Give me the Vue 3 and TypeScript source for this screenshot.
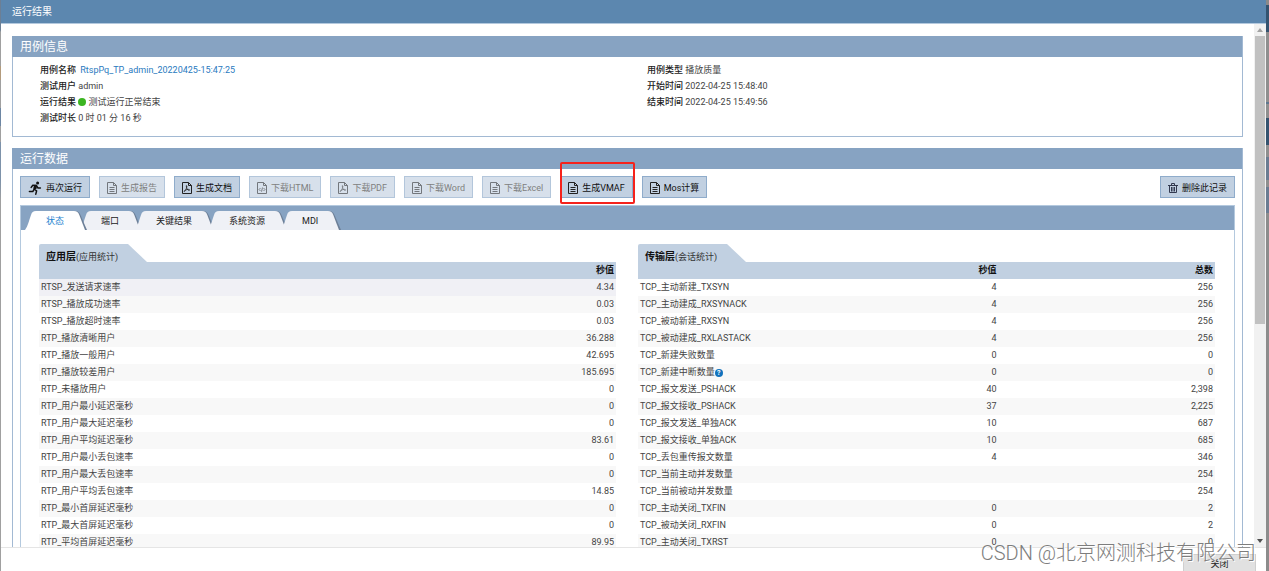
<script setup lang="ts">
import { ref } from 'vue'

interface Action {
  label: string
  icon: 'run' | 'doc' | 'pdf' | 'html'
  disabled?: boolean
  marked?: boolean
}

const actions: Action[] = [
  { label: '再次运行', icon: 'run' },
  { label: '生成报告', icon: 'doc', disabled: true },
  { label: '生成文档', icon: 'pdf' },
  { label: '下载HTML', icon: 'html', disabled: true },
  { label: '下载PDF', icon: 'pdf', disabled: true },
  { label: '下载Word', icon: 'doc', disabled: true },
  { label: '下载Excel', icon: 'doc', disabled: true },
  { label: '生成VMAF', icon: 'doc', marked: true },
  { label: 'Mos计算', icon: 'doc' },
]

const tabs = ['状态', '端口', '关键结果', '系统资源', 'MDI']
const active = ref(0)

const appRows: [string, string][] = [
  ['RTSP_发送请求速率', '4.34'],
  ['RTSP_播放成功速率', '0.03'],
  ['RTSP_播放超时速率', '0.03'],
  ['RTP_播放清晰用户', '36.288'],
  ['RTP_播放一般用户', '42.695'],
  ['RTP_播放较差用户', '185.695'],
  ['RTP_未播放用户', '0'],
  ['RTP_用户最小延迟毫秒', '0'],
  ['RTP_用户最大延迟毫秒', '0'],
  ['RTP_用户平均延迟毫秒', '83.61'],
  ['RTP_用户最小丢包速率', '0'],
  ['RTP_用户最大丢包速率', '0'],
  ['RTP_用户平均丢包速率', '14.85'],
  ['RTP_最小首屏延迟毫秒', '0'],
  ['RTP_最大首屏延迟毫秒', '0'],
  ['RTP_平均首屏延迟毫秒', '89.95'],
]

const tcpRows: [string, string, string][] = [
  ['TCP_主动新建_TXSYN', '4', '256'],
  ['TCP_主动建成_RXSYNACK', '4', '256'],
  ['TCP_被动新建_RXSYN', '4', '256'],
  ['TCP_被动建成_RXLASTACK', '4', '256'],
  ['TCP_新建失败数量', '0', '0'],
  ['TCP_新建中断数量', '0', '0'],
  ['TCP_报文发送_PSHACK', '40', '2,398'],
  ['TCP_报文接收_PSHACK', '37', '2,225'],
  ['TCP_报文发送_单独ACK', '10', '687'],
  ['TCP_报文接收_单独ACK', '10', '685'],
  ['TCP_丢包重传报文数量', '4', '346'],
  ['TCP_当前主动并发数量', '', '254'],
  ['TCP_当前被动并发数量', '', '254'],
  ['TCP_主动关闭_TXFIN', '0', '2'],
  ['TCP_被动关闭_RXFIN', '0', '2'],
  ['TCP_主动关闭_TXRST', '0', '0'],
]
</script>

<template>
  <div class="page">
    <div class="dialog">
      <header class="title">运行结果</header>
      <div class="body">
        <main class="content">
          <section class="panel">
            <h2>用例信息</h2>
            <div class="info">
              <div>
                <p><b>用例名称</b> <a href="#" class="case">RtspPq_TP_admin_20220425-15:47:25</a></p>
                <p><b>测试用户</b> admin</p>
                <p><b>运行结果</b> <i class="dot"></i> 测试运行正常结束</p>
                <p><b>测试时长</b> 0 时 01 分 16 秒</p>
              </div>
              <div>
                <p><b>用例类型</b> 播放质量</p>
                <p><b>开始时间</b> 2022-04-25 15:48:40</p>
                <p><b>结束时间</b> 2022-04-25 15:49:56</p>
              </div>
            </div>
          </section>

          <section class="panel data">
            <h2>运行数据</h2>
            <div class="toolbar">
              <span v-for="a in actions" :key="a.label" class="slot">
                <button type="button" class="btn" :disabled="a.disabled">
                  <svg v-if="a.icon === 'run'" width="14" height="14" viewBox="0 0 14 14">
                    <circle cx="9.6" cy="2" r="1.5" fill="#111" />
                    <path d="M8 4.2 6 8l2.6 1.8-.8 3.4M6.2 8.2 4.8 10.6H1.4M8 4.4 4.8 4.2 3.2 6.4M8.4 4.8l1.6 2.2h2.4" fill="none" stroke="#111" stroke-width="1.5" stroke-linecap="round" stroke-linejoin="round" />
                    <path d="M6.6 3.8 9.2 4.2 8.4 8 6.2 8.2 5.4 7z" fill="#111" />
                  </svg>
                  <svg v-else width="10" height="12" viewBox="0 0 10 12" fill="none" stroke="#222" stroke-width="1">
                    <path d="M.5.5h6l3 3v8h-9zM6.5.5v3h3" />
                    <path v-if="a.icon === 'doc'" d="M2.5 5.5h5M2.5 7.5h5M2.5 9.5h5" />
                    <path v-else-if="a.icon === 'pdf'" d="M4.3 3.6c1 0 .5 2.2-.5 4.1S2 10 2.1 9.2 4.5 7.4 6.3 7.4s1.700 1.100.6 1S4.100 6 4.300 3.600" stroke-width=".8" />
                    <path v-else d="M3.500 6 2 7.500 3.500 9M6.500 6 8 7.500 6.500 9M5.500 5.500 4.500 9.700" stroke-width=".9" />
                  </svg>
                  <span>{{ a.label }}</span>
                </button>
                <i v-if="a.marked" class="mark"></i>
              </span>
              <button type="button" class="btn remove">
                <svg width="10" height="12" viewBox="0 0 10 12" fill="none" stroke="#333a50">
                  <path d="M0 3.500h10M3.500 3V1.500h3V3M1.500 3.500v7h7v-7M3.500 5v4.500M5 5v4.500M6.500 5v4.500" />
                </svg>
                <span>删除此记录</span>
              </button>
            </div>

            <div class="tabbox">
              <div class="tabs" role="tablist">
                <button
                  v-for="(t, i) in tabs"
                  :key="t"
                  type="button"
                  role="tab"
                  class="tab"
                  :class="{ on: i === active }"
                  :aria-selected="i === active"
                  @click="active = i"
                >
                  <svg class="end" width="11" height="19" viewBox="0 0 11 19">
                    <path class="face" d="M0 19C3 15 4 9 6 4 7 1 8 0 11 0V19z" />
                  </svg>
                  <span class="mid">{{ t }}</span>
                  <svg class="end" width="13" height="19" viewBox="0 0 13 19">
                    <path d="M0 0C4 0 5 1 6.500 4L13 19H9z" fill="#6c7f97" />
                    <path class="face" d="M0 0C3 0 4 1 5.300 4L11 19H0z" />
                  </svg>
                </button>
              </div>

              <div class="grids">
                <div class="block">
                  <div class="cap">
                    <div class="capface"><b>应用层</b>(应用统计)</div>
                    <svg width="19" height="18" viewBox="0 0 19 18"><path d="M0 0 19 18H0z" fill="#c1d0e1" /></svg>
                  </div>
                  <table class="grid">
                    <thead>
                      <tr><th></th><th>秒值</th></tr>
                    </thead>
                    <tbody>
                      <tr v-for="(r, i) in appRows" :key="r[0]" :class="{ hover: i === 0 }">
                        <td>{{ r[0] }}</td>
                        <td>{{ r[1] }}</td>
                      </tr>
                    </tbody>
                  </table>
                </div>

                <div class="block">
                  <div class="cap">
                    <div class="capface"><b>传输层</b>(会话统计)</div>
                    <svg width="19" height="18" viewBox="0 0 19 18"><path d="M0 0 19 18H0z" fill="#c1d0e1" /></svg>
                  </div>
                  <table class="grid three">
                    <thead>
                      <tr><th></th><th>秒值</th><th>总数</th></tr>
                    </thead>
                    <tbody>
                      <tr v-for="(r, i) in tcpRows" :key="r[0]">
                        <td>{{ r[0] }}<span v-if="i === 5" class="help">?</span></td>
                        <td>{{ r[1] }}</td>
                        <td>{{ r[2] }}</td>
                      </tr>
                    </tbody>
                  </table>
                </div>
              </div>
            </div>
          </section>
        </main>
        <div class="scroll">
          <svg width="12" height="12" viewBox="0 0 12 12"><path d="M6 4 9 8H3z" fill="#a3a3a3" /></svg>
          <div class="thumb"></div>
          <svg width="12" height="12" viewBox="0 0 12 12"><path d="M3 4h6L6 8z" fill="#505050" /></svg>
        </div>
      </div>
      <footer class="foot">
        <button type="button" class="close">关闭</button>
      </footer>
    </div>
    <div class="edge"></div>
    <div class="watermark">CSDN @北京网测科技有限公司</div>
  </div>
</template>

<style>
body {
  margin: 0;
  overflow: hidden;
}
</style>

<style scoped>
.page {
  position: relative;
  display: flex;
  height: 100vh;
  padding-left: 1px;
  box-sizing: border-box;
  overflow: hidden;
  background: linear-gradient(#6c7f95 30px, #a0a0a0 32px 66px, #b39b7c 66px 80px, #a0a0a0 80px 108px, #6d86a3 108px 126px, #a0a0a0 126px 142px, #7d92aa 142px 180px, #a0a0a0 200px);
  color: #444;
  font: 9px/16px Roboto, "Noto Sans CJK SC", sans-serif;
}
.edge {
  width: 3px;
  background: linear-gradient(#8a8a8a 5px, #34536f 5px 32px, #8f8f8f 32px 102px, #5f7890 102px 104px, #8f8f8f 104px 118px, #34536f 118px 145px, #8f8f8f 145px 157px, #6a7c92 157px 180px, #8f8f8f 180px 187px, #6a7c92 187px 213px, #8c8c8c 213px);
}
button {
  font: inherit;
  color: inherit;
}
.dialog {
  flex: 1;
  min-width: 0;
  display: flex;
  flex-direction: column;
  background: #fff;
}
.title {
  flex: none;
  height: 23px;
  padding-left: 11px;
  background: #5c87af;
  border-bottom: 1px solid #b4c9de;
  color: #fff;
  font-size: 10px;
  line-height: 23px;
}
.body {
  flex: 1;
  min-height: 0;
  display: flex;
}
.content {
  flex: 1;
  min-width: 0;
  overflow: hidden;
  padding: 12px 11px 0;
}
.panel {
  border: 1px solid #a2b9d3;
  border-top: 0;
  margin-bottom: 11px;
}
h2 {
  margin: 0 0 0 -1px;
  padding-left: 8px;
  height: 21px;
  background: #87a3c2;
  color: #fff;
  font-size: 12px;
  line-height: 23px;
  font-weight: 400;
}
.info {
  display: grid;
  grid-template-columns: 1fr 1fr;
  gap: 12px;
  padding: 5px 0 10px 27px;
}
.info p {
  margin: 0;
}
b {
  font-weight: 500;
  color: #222;
}
.case {
  margin-left: 2px;
  color: #2a7ac0;
  text-decoration: none;
}
.dot {
  display: inline-block;
  width: 8px;
  height: 8px;
  border-radius: 50%;
  background: #3cb521;
  vertical-align: -1px;
}
.toolbar {
  display: flex;
  gap: 9px;
  padding: 7px 7px;
}
.slot {
  position: relative;
  display: flex;
}
.btn {
  display: flex;
  align-items: center;
  gap: 4px;
  height: 22px;
  padding: 1px 7px 0;
  border: 1px solid #8faccb;
  background: #c1d0e1;
  color: #111;
  white-space: nowrap;
}
.btn:disabled {
  border-color: #b3c6db;
  background: #d7e0eb;
  color: #808080;
}
.btn:disabled svg {
  opacity: 0.55;
}
.remove {
  margin-left: auto;
}
.mark {
  position: absolute;
  inset: -14px -2px -6px 0;
  border: 2px solid #f5221b;
  border-radius: 2px;
}
.tabbox {
  margin: 0 7px;
  border: 1px solid #b4c9de;
}
.tabs {
  display: flex;
  align-items: flex-end;
  height: 24px;
  padding-left: 4px;
  background: #87a3c2;
}
.tab {
  position: relative;
  display: flex;
  height: 19px;
  padding: 0;
  margin-right: -7px;
  border: 0;
  background: none;
  color: #222;
  line-height: 20px;
}
.end {
  display: block;
}
.face {
  fill: #eff1f6;
}
.mid {
  height: 19px;
  padding: 0 10px;
  background: #eff1f6;
}
.on {
  z-index: 1;
  color: #1b82cf;
}
.on .face {
  fill: #fff;
}
.on .mid {
  background: #fff;
}
.grids {
  display: grid;
  grid-template-columns: 1fr 1fr;
  gap: 22px;
  padding: 14px 19px 14px 18px;
}
.cap {
  display: flex;
  height: 18px;
}
.capface {
  width: 82px;
  padding-left: 7px;
  border-top-left-radius: 2px;
  background: #c1d0e1;
  line-height: 26px;
  color: #333;
  white-space: nowrap;
}
.capface b {
  font-size: 10px;
  font-weight: 700;
  color: #111;
}
.grid {
  width: 100%;
  border-collapse: collapse;
  table-layout: fixed;
}
.grid th,
.grid td {
  box-sizing: border-box;
  height: 17px;
  padding: 0 2px;
  line-height: 17px;
  text-align: right;
}
.grid th {
  background: #c1d0e1;
  color: #111;
  font-weight: 700;
}
.grid td:first-child {
  text-align: left;
}
.three th:first-child {
  width: 36%;
}
.three th:last-child {
  width: 37.5%;
}
tbody tr:nth-child(even) {
  background: #f8f8f8;
}
tbody tr.hover {
  background: #f0f0f5;
}
.help {
  display: inline-block;
  width: 8px;
  height: 8px;
  border-radius: 50%;
  background: #1272bd;
  color: #fff;
  font-size: 7px;
  font-weight: 700;
  line-height: 8px;
  text-align: center;
  vertical-align: 0;
}
.scroll {
  flex: none;
  width: 12px;
  display: flex;
  flex-direction: column;
  background: #f1f1f1;
}
.thumb {
  height: 55%;
  margin: 0 1px auto;
  background: #c1c1c1;
}
.foot {
  flex: none;
  display: flex;
  justify-content: flex-end;
  height: 24px;
  padding: 6px 10px 0 0;
  box-sizing: border-box;
  border-top: 1px solid #e5e5e5;
}
.close {
  flex: none;
  width: 73px;
  height: 20px;
  padding: 0;
  border: 1px solid #cfcfcf;
  background: #e1e1e1;
  color: #222;
}
.watermark {
  position: absolute;
  right: 13px;
  bottom: 5px;
  font-size: 20px;
  font-weight: 300;
  line-height: 26px;
  color: #7d7d7d;
  text-shadow: 1px 1px 0 #fff;
}
</style>
